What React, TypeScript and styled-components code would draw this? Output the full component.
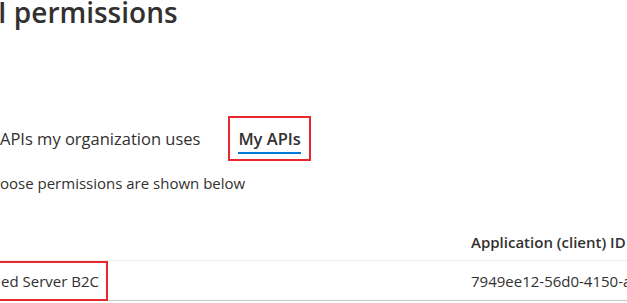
import React from 'react';
import styled, { createGlobalStyle } from 'styled-components';

const GlobalStyle = createGlobalStyle`
  body {
    margin: 0;
    background: #ffffff;
    font-family: "Open Sans", "Noto Sans", Arial, sans-serif;
    color: #323130;
    overflow: hidden;
  }
`;

const Page = styled.div`
  width: 627px;
  height: 303px;
  overflow: hidden;
  display: flex;
  flex-direction: column;
`;

const Title = styled.h1`
  margin: -8px 0 0 -2px;
  font-size: 28px;
  font-weight: 600;
  line-height: 40px;
  height: 40px;
  white-space: nowrap;
`;

const Tabs = styled.div`
  display: flex;
  align-items: stretch;
  margin-top: 84px;
  height: 45px;
`;

const Tab = styled.div<{ $active?: boolean; $marked?: boolean }>`
  position: relative;
  display: flex;
  align-items: center;
  padding: 0 ${p => (p.$marked ? '8px' : '0')};
  margin-left: ${p => (p.$marked ? '28px' : '0')};
  font-size: 16.5px;
  font-weight: ${p => (p.$active ? 600 : 400)};
  white-space: nowrap;
  border: ${p => (p.$marked ? '2px solid #e8282e' : 'none')};
  &::after {
    content: '';
    display: ${p => (p.$active ? 'block' : 'none')};
    position: absolute;
    left: 8px;
    right: 8px;
    bottom: 5px;
    height: 2px;
    background: #0078d4;
  }
`;

const Description = styled.p`
  margin: 10px 0 0 0;
  font-size: 15px;
  line-height: 24px;
  white-space: nowrap;
`;

const Table = styled.div`
  margin-top: 29px;
  display: flex;
  flex-direction: column;
`;

const Row = styled.div<{ $header?: boolean; $last?: boolean }>`
  display: grid;
  grid-template-columns: 471px 1fr;
  height: ${p => (p.$header ? '36px' : '39px')};
  align-items: center;
  border-bottom: 1px solid ${p => (p.$last ? '#c8c6c4' : '#edebe9')};
  font-size: 15px;
  font-weight: ${p => (p.$header ? 600 : 400)};
  white-space: nowrap;
`;

const Cell = styled.div<{ $marked?: boolean }>`
  display: flex;
  align-items: center;
  overflow: hidden;
  ${p =>
    p.$marked &&
    `
    justify-self: start;
    height: 36px;
    margin-left: -4px;
    padding: 0 7px 0 3px;
    border: 2px solid #e8282e;
  `}
`;

export default function App() {
  return (
    <Page>
      <GlobalStyle />
      <Title>I permissions</Title>
      <Tabs>
        <Tab>APIs my organization uses</Tab>
        <Tab $active $marked>My APIs</Tab>
      </Tabs>
      <Description>oose permissions are shown below</Description>
      <Table>
        <Row $header>
          <Cell />
          <Cell>Application (client) ID</Cell>
        </Row>
        <Row $last>
          <Cell $marked>ed Server B2C</Cell>
          <Cell>7949ee12-56d0-4150-a0a8-2c1f4b7e9d31</Cell>
        </Row>
      </Table>
    </Page>
  );
}
